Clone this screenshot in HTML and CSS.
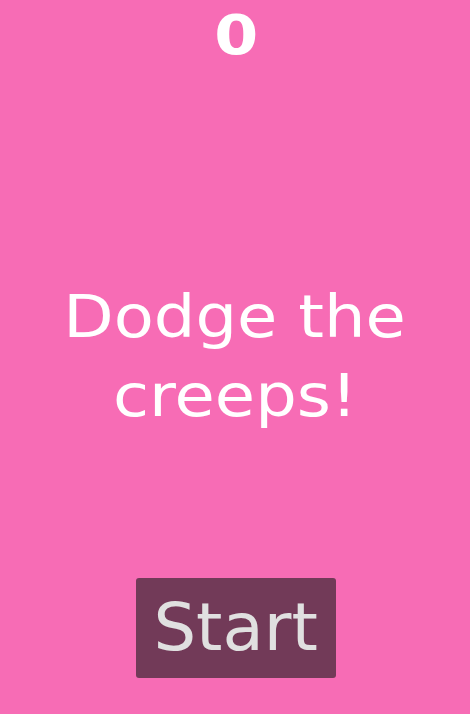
FILE: index.html
```html
<!DOCTYPE html>
<html lang="en">
<head>
<meta charset="utf-8">
<title>Dodge the Creeps</title>
<link rel="stylesheet" href="styles.css">
</head>
<body>
<main class="hud">
  <div class="top">
    <div class="score">0</div>
  </div>
  <div class="message">
    <span class="line">Dodge the</span>
    <span class="line">creeps!</span>
  </div>
  <div class="bottom">
    <button class="start" type="button"><span class="start-label">Start</span></button>
  </div>
</main>
</body>
</html>
```

FILE: styles.css
```css
html, body {
  margin: 0;
  padding: 0;
  height: 100%;
}

body {
  background: #f76cb5;
  font-family: "DejaVu Sans", "Liberation Sans", sans-serif;
  color: #ffffff;
  overflow: hidden;
}

.hud {
  height: 100vh;
  display: grid;
  grid-template-rows: 1fr auto 1fr;
}

.top {
  display: flex;
  justify-content: center;
  align-items: flex-start;
}

.score {
  font-size: 55px;
  font-weight: bold;
  line-height: 70px;
  transform: scaleX(1.15);
  padding-left: 3px;
}

.message {
  display: flex;
  flex-direction: column;
  align-items: center;
  font-size: 58px;
  line-height: 79px;
}

.line {
  display: block;
  transform: scaleX(1.13);
  white-space: nowrap;
}

.bottom {
  display: flex;
  justify-content: center;
  align-items: flex-end;
  padding: 0 0 36px 2px;
}

.start {
  width: 200px;
  height: 100px;
  border: none;
  border-radius: 3px;
  background: #723a58;
  color: #e0e0e0;
  font-family: "DejaVu Sans", "Liberation Sans", sans-serif;
  font-size: 66px;
  line-height: 1;
  padding: 0;
  display: flex;
  align-items: center;
  justify-content: center;
}

.start-label {
  display: block;
  transform: scaleX(1.02);
}
```
